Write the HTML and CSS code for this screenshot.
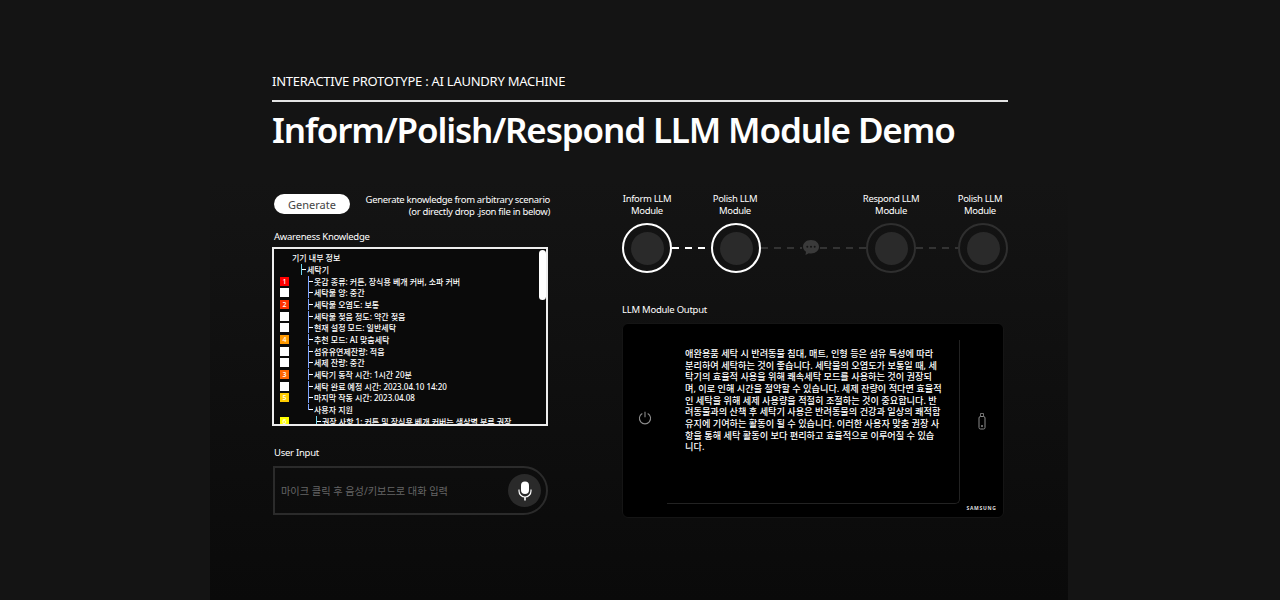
FILE: index.html
```html
<!DOCTYPE html>
<html>
  <head>
    <title>AI Laundry Machine Demo</title>
    <meta charset="utf-8">
    <link rel="stylesheet" href="styles.css">
  </head>
  <body>
    <main class="stage">
      <div class="wrap">
        <!-- (A) HEADER -->
        <header class="head">
          <p class="eyebrow">INTERACTIVE PROTOTYPE : AI LAUNDRY MACHINE</p>
          <h1 class="title">Inform/Polish/Respond LLM Module Demo</h1>
        </header>

        <div class="cols">
          <!-- (B) LEFT COLUMN -->
          <section class="left">
            <div class="gen">
              <button class="gen-btn">Generate</button>
              <p class="gen-note">Generate knowledge from arbitrary scenario<br>(or directly drop .json file in below)</p>
            </div>
            <p class="label label-know">Awareness Knowledge</p>
            <div class="know">
              <div class="row"><span class="mark none"></span><span class="t0">기기 내부 정보</span></div>
              <div class="row"><span class="mark none"></span><span class="t1"><i class="branch cyan"></i>세탁기</span></div>
              <div class="row"><span class="mark m1">1</span><span class="t2"><i class="branch"></i>옷감 종류: 커튼, 장식용 베개 커버, 소파 커버</span></div>
              <div class="row"><span class="mark"></span><span class="t2"><i class="branch"></i>세탁물 양: 중간</span></div>
              <div class="row"><span class="mark m2">2</span><span class="t2"><i class="branch"></i>세탁물 오염도: 보통</span></div>
              <div class="row"><span class="mark"></span><span class="t2"><i class="branch"></i>세탁물 젖음 정도: 약간 젖음</span></div>
              <div class="row"><span class="mark"></span><span class="t2"><i class="branch"></i>현재 설정 모드: 일반세탁</span></div>
              <div class="row"><span class="mark m4">4</span><span class="t2"><i class="branch"></i>추천 모드: AI 맞춤세탁</span></div>
              <div class="row"><span class="mark"></span><span class="t2"><i class="branch"></i>섬유유연제잔량: 적음</span></div>
              <div class="row"><span class="mark"></span><span class="t2"><i class="branch"></i>세제 잔량: 중간</span></div>
              <div class="row"><span class="mark m3">3</span><span class="t2"><i class="branch"></i>세탁기 동작 시간: 1시간 20분</span></div>
              <div class="row"><span class="mark"></span><span class="t2"><i class="branch"></i>세탁 완료 예정 시간: 2023.04.10 14:20</span></div>
              <div class="row"><span class="mark m5">5</span><span class="t2"><i class="branch"></i>마지막 작동 시간: 2023.04.08</span></div>
              <div class="row"><span class="mark none"></span><span class="t2"><i class="branch last"></i>사용자 지원</span></div>
              <div class="row"><span class="mark m6">6</span><span class="t3"><i class="branch cyan"></i>권장 사항 1: 커튼 및 장식용 베개 커버는 색상별 분류 권장</span></div>
              <span class="thumb"></span>
            </div>
            <p class="label label-input">User Input</p>
            <div class="input">
              <span class="placeholder">마이크 클릭 후 음성/키보드로 대화 입력</span>
              <span class="mic">
                <svg width="14" height="20" viewBox="0 0 14 20">
                  <rect x="3" y="0.5" width="8" height="12.500" rx="4" fill="#fff"/>
                  <path d="M1 8.500v1.500a6 6 0 0 0 12 0V8.500" fill="none" stroke="#fff" stroke-width="1.200"/>
                  <path d="M7 16v3.500" stroke="#fff" stroke-width="1.600"/>
                </svg>
              </span>
            </div>
          </section>

          <!-- (C) RIGHT COLUMN -->
          <section class="right">
            <div class="flow">
              <div class="node on"><p class="node-name">Inform LLM<br>Module</p><span class="ring"><b></b></span></div>
              <span class="link on w1"></span>
              <div class="node on"><p class="node-name nudge-1">Polish LLM<br>Module</p><span class="ring"><b></b></span></div>
              <span class="link w2"></span>
              <svg class="bubble" width="18" height="17" viewBox="0 0 18 17">
                <path d="M9 1c4.700 0 8 2.900 8 6.800s-3.300 6.700-8 6.700c-.8 0-1.500-.1-2.200-.2L3.500 16l.5-3.200C2.200 11.600 1 9.900 1 7.800 1 3.900 4.300 1 9 1z" fill="#3a3a3a"/>
                <circle cx="5.300" cy="7.800" r="1" fill="#151515"/><circle cx="9" cy="7.800" r="1" fill="#151515"/><circle cx="12.700" cy="7.800" r="1" fill="#151515"/>
              </svg>
              <span class="link w3"></span>
              <div class="node"><p class="node-name">Respond LLM<br>Module</p><span class="ring"><b></b></span></div>
              <span class="link w4"></span>
              <div class="node"><p class="node-name nudge-5">Polish LLM<br>Module</p><span class="ring"><b></b></span></div>
            </div>
            <p class="label label-out">LLM Module Output</p>
            <div class="panel">
              <div class="side side-l">
                <svg width="14" height="14" viewBox="0 0 14 14" fill="none" stroke="#8a8a8a" stroke-width="1.100">
                  <path d="M4.300 2.400a5.600 5.600 0 1 0 5.400 0"/><path d="M7 .8v5.400"/>
                </svg>
              </div>
              <div class="screen">
                <p>애완용품 세탁 시 반려동물 침대, 매트, 인형 등은 섬유 특성에 따라</p>
                <p>분리하여 세탁하는 것이 좋습니다. 세탁물의 오염도가 보통일 때, 세</p>
                <p>탁기의 효율적 사용을 위해 쾌속세탁 모드를 사용하는 것이 권장되</p>
                <p>며, 이로 인해 시간을 절약할 수 있습니다. 세제 잔량이 적다면 효율적</p>
                <p>인 세탁을 위해 세제 사용량을 적절히 조절하는 것이 중요합니다. 반</p>
                <p>려동물과의 산책 후 세탁기 사용은 반려동물의 건강과 일상의 쾌적함</p>
                <p>유지에 기여하는 활동이 될 수 있습니다. 이러한 사용자 맞춤 권장 사</p>
                <p>항을 통해 세탁 활동이 보다 편리하고 효율적으로 이루어질 수 있습</p>
                <p>니다.</p>
              </div>
              <div class="side side-r">
                <svg width="8" height="18" viewBox="0 0 8 18" fill="none" stroke="#8a8a8a">
                  <rect x="1" y="4.500" width="6" height="12.500" rx="1.500"/>
                  <path d="M2.500 4.500V1.500h3v3" stroke-width=".8"/>
                  <circle cx="4" cy="14" r="1" fill="#8a8a8a" stroke="none"/>
                </svg>
                <span class="brand">SAMSUNG</span>
              </div>
            </div>
          </section>
        </div>
      </div>
    </main>
  </body>
</html>
```

FILE: styles.css
```css
/* (X) BASE */
* {
  font-family: "Noto Sans", "Noto Sans CJK KR", sans-serif;
  box-sizing: border-box;
}
html, body {
  margin: 0;
  height: 100%;
  overflow: hidden;
  background: #141414;
  color: #fff;
}
p, h1 { margin: 0; }

.stage {
  width: 858px;
  height: 600px;
  margin-left: 210px;
  background: linear-gradient(#141414, #141414 30%, #0a0a0a);
}
.wrap {
  width: 736px;
  margin-left: 62px;
  padding-top: 72px;
}

/* (A) HEADER */
.eyebrow {
  font-size: 13px;
  line-height: 19px;
  letter-spacing: -.25px;
  padding-bottom: 9px;
  border-bottom: 2px solid #e4e4e4;
}
.title {
  font-size: 35px;
  font-weight: 600;
  line-height: 49px;
  letter-spacing: -1.150px;
  margin-top: 3px;
}
.cols {
  display: flex;
  justify-content: space-between;
  margin-top: 40px;
}

/* (B) LEFT COLUMN */
.left { width: 278px; }
.gen {
  display: flex;
  justify-content: space-between;
  align-items: center;
  padding-left: 2px;
}
.gen-btn {
  width: 76px;
  height: 20px;
  margin-bottom: 4px;
  padding: 0;
  border: 0;
  border-radius: 10px;
  background: #fff;
  color: #444;
  font-size: 11px;
}
.gen-note {
  font-size: 9.500px;
  line-height: 12px;
  letter-spacing: -.33px;
  text-align: right;
}
.label {
  font-size: 9.500px;
  line-height: 13px;
  letter-spacing: -.25px;
}
.label-know { margin: 12px 0 4px 2px; }
.know {
  position: relative;
  width: 276px;
  height: 179px;
  padding-top: 3px;
  border: 2px solid #eee;
  background: #0a0a0a;
  overflow: hidden;
}
.row {
  display: flex;
  align-items: center;
  height: 11.670px;
  font-size: 8px;
  font-weight: 500;
  white-space: nowrap;
}
.mark {
  flex: none;
  width: 9px;
  height: 9px;
  margin: 0 3px 0 6px;
  background: #fff;
  color: #fff;
  font-size: 7px;
  line-height: 9px;
  text-align: center;
}
.mark.none { background: none; }
.m1 { background: #f00; }
.m2 { background: #ff3300; }
.m3 { background: #ff6600; }
.m4 { background: #ff9900; }
.m5 { background: #ffcc00; }
.m6 { background: #ffff00; }
.t0 { margin-left: 0; }
.t1 { margin-left: 9px; }
.t2 { margin-left: 16px; }
.t3 { margin-left: 24px; }
.branch {
  display: inline-block;
  width: 5px;
  height: 11px;
  margin-right: 1px;
  vertical-align: -2px;
  border-left: 1px solid #7da4ff;
  background: linear-gradient(#fff, #fff) 0 5px / 4px 1px no-repeat;
}
.branch.cyan { border-left-color: #6fd6ee; }
.branch.last { height: 6px; vertical-align: 3px; background-position: 0 5px; }
.thumb {
  position: absolute;
  top: 1px;
  right: 0;
  width: 7px;
  height: 50px;
  border-radius: 4px;
  background: #fff;
}
.label-input { margin: 20px 0 7px 2px; }
.input {
  display: flex;
  align-items: center;
  justify-content: space-between;
  width: 275px;
  height: 49px;
  margin-left: 1px;
  padding: 0 5px 0 6px;
  border: 2px solid #2b2b2b;
  border-radius: 0 25px 25px 0;
}
.placeholder {
  color: #666;
  font-size: 10.200px;
}
.mic {
  display: flex;
  align-items: center;
  justify-content: center;
  width: 33px;
  height: 33px;
  border-radius: 50%;
  background: #2a2a2a;
}

/* (C) RIGHT COLUMN */
.right { width: 386px; }
.flow {
  display: flex;
  align-items: flex-end;
  height: 79px;
}
.node {
  position: relative;
  width: 50px;
  display: flex;
  flex-direction: column;
  align-items: center;
}
.node-name {
  font-size: 9.500px;
  line-height: 12px;
  letter-spacing: -.35px;
  text-align: center;
  white-space: nowrap;
  margin-bottom: 6px;
}
.nudge-1 { padding-right: 2px; }
.nudge-5 { padding-right: 6px; }
.ring {
  display: flex;
  align-items: center;
  justify-content: center;
  width: 50px;
  height: 50px;
  border: 2px solid #2f2f2f;
  border-radius: 50%;
}
.ring b {
  width: 33px;
  height: 33px;
  border-radius: 50%;
  background: #2a2a2a;
}
.node.on .ring { border-color: #fff; }
.link {
  height: 2px;
  margin-bottom: 24px;
  background: repeating-linear-gradient(90deg, #333 0 7px, transparent 7px 13px);
}
.link.on { background: repeating-linear-gradient(90deg, #fff 0 7px, transparent 7px 13px); }
.w1 { width: 39px; }
.w2 { width: 41px; }
.w3 { width: 46px; }
.w4 { width: 42px; }
.bubble { flex: none; margin-bottom: 17px; }
.label-out { margin: 30px 0 7px; }
.panel {
  display: flex;
  width: 382px;
  height: 195px;
  border: 1px solid #151515;
  border-radius: 6px;
  background: #000;
}
.side {
  position: relative;
  width: 44px;
  display: flex;
  align-items: center;
  justify-content: center;
}
.side-l { padding-bottom: 6px; }
.side-r { width: 43px; }
.screen {
  width: 293px;
  height: 164px;
  margin-top: 16px;
  padding: 8px 0 0 18px;
  border-right: 1px solid #222;
  border-bottom: 1px solid #222;
  border-radius: 0 0 5px 0;
  font-size: 9.180px;
  font-weight: 500;
  line-height: 11.670px;
  white-space: nowrap;
}
.brand {
  position: absolute;
  bottom: 6px;
  left: 0;
  width: 100%;
  text-align: center;
  font-size: 5px;
  font-weight: 700;
  letter-spacing: .7px;
  color: #ddd;
}
```
